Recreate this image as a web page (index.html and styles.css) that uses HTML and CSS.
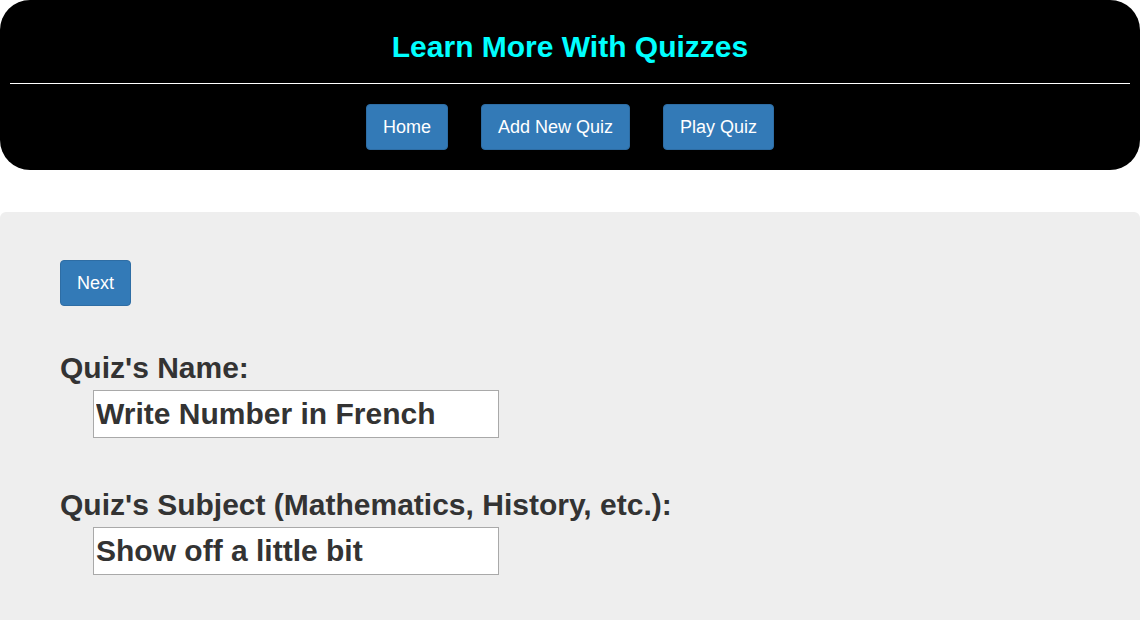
FILE: index.html
```html
<!DOCTYPE html>
<html>
<head>
<meta charset="utf-8">
<link rel="stylesheet" href="styles.css">
</head>
<body>
<header class="top">
  <h1 class="title">Learn More With Quizzes</h1>
  <hr class="rule">
  <nav class="nav">
    <a class="btn">Home</a>
    <a class="btn">Add New Quiz</a>
    <a class="btn">Play Quiz</a>
  </nav>
</header>
<main class="panel">
  <div class="actions"><button class="btn">Next</button></div>
  <div class="field">
    <label class="label">Quiz's Name:</label>
    <input class="input" type="text" value="Write Number in French">
  </div>
  <div class="field">
    <label class="label">Quiz's Subject (Mathematics, History, etc.):</label>
    <input class="input" type="text" value="Show off a little bit">
  </div>
</main>
</body>
</html>
```
FILE: styles.css
```css
html, body { margin: 0; padding: 0; background: #fff; }
body { font-family: "Liberation Sans", Arial, sans-serif; width: 1140px; height: 620px; overflow: hidden; }
.top {
  background: #000;
  border-radius: 30px;
  height: 170px;
  box-sizing: border-box;
  padding: 28px 10px 0;
  display: flex;
  flex-direction: column;
  align-items: stretch;
}
.title {
  margin: 0;
  color: #00ffff;
  font-size: 30px;
  line-height: 38px;
  text-align: center;
  font-weight: bold;
}
.rule { margin: 17px 0 0; border: 0; border-top: 1px solid #fff; height: 0; }
.nav { display: flex; justify-content: center; gap: 33px; margin-top: 20px; }
.btn {
  background: #337ab7;
  color: #fff;
  border: 1px solid #2e6da4;
  border-radius: 4px;
  font-family: "Liberation Sans", Arial, sans-serif;
  font-size: 18px;
  height: 46px;
  box-sizing: border-box;
  padding: 0 16px;
  white-space: nowrap;
  display: inline-flex;
  align-items: center;
  justify-content: center;
}
.panel {
  margin-top: 42px;
  background: #eeeeee;
  border-radius: 6px 6px 0 0;
  height: 420px;
  padding: 48px 60px 0;
  box-sizing: border-box;
}
.actions { display: flex; }
.field { display: flex; flex-direction: column; align-items: flex-start; margin-top: 43px; }
.field + .field { margin-top: 48px; }
.label { color: #333; font-weight: bold; font-size: 30px; line-height: 38px; margin-bottom: 3px; }
.input {
  margin-left: 33px;
  width: 406px;
  height: 48px;
  box-sizing: border-box;
  border: 1px solid #a9a9a9;
  background: #fff;
  color: #333;
  font-family: "Liberation Sans", Arial, sans-serif;
  font-weight: bold;
  font-size: 30px;
  padding: 0 2px;
  outline: none;
}
```
